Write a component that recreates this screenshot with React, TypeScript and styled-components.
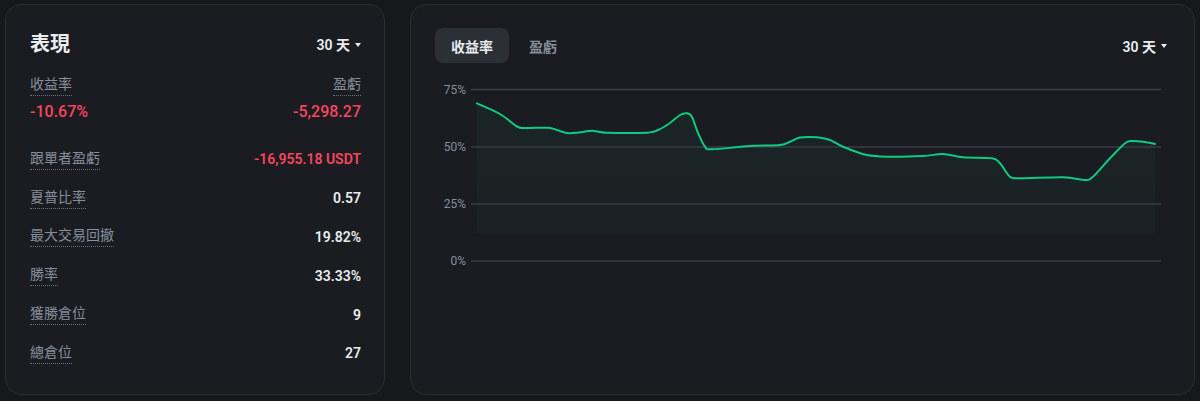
import React from "react";
import styled, { createGlobalStyle } from "styled-components";

const Global = createGlobalStyle`
  html, body { margin: 0; padding: 0; background: #17181c; }
  body { font-family: Roboto, "Noto Sans CJK TC", "Noto Sans", sans-serif; color: #eaecef; }
  * { box-sizing: border-box; }
`;

const Page = styled.div`
  display: flex;
  gap: 25px;
  padding: 4px 5px 6px 5px;
  height: 401px;
`;

const Card = styled.section<{ $w: number }>`
  width: ${(p) => p.$w}px;
  height: 391px;
  flex: none;
  background: #1b1c21;
  border: 1px solid #2a2d33;
  border-radius: 16px;
`;

const LeftCard = styled(Card)`
  padding: 25px 23px 0 24px;
  display: flex;
  flex-direction: column;
`;

const RightCard = styled(Card)`
  padding: 23px 27px 0 24px;
  display: flex;
  flex-direction: column;
`;

const HeaderRow = styled.div`
  display: flex;
  align-items: center;
  justify-content: space-between;
  height: 28px;
`;

const Title = styled.h2`
  margin: 0;
  font-size: 20px;
  font-weight: 700;
  color: #eaecef;
  line-height: 28px;
`;

const Range = styled.button`
  display: flex;
  align-items: center;
  gap: 5px;
  background: none;
  border: none;
  padding: 0;
  font-family: inherit;
  font-size: 14px;
  font-weight: 600;
  color: #eaecef;
  cursor: pointer;
`;

const Caret = styled.span`
  width: 0;
  height: 0;
  border-left: 3.5px solid transparent;
  border-right: 3.5px solid transparent;
  border-top: 4px solid #eaecef;
  margin-top: 1px;
`;

const PairRow = styled.div<{ $mt: number }>`
  display: flex;
  justify-content: space-between;
  align-items: center;
  margin-top: ${(p) => p.$mt}px;
`;

const Label = styled.span`
  display: inline-block;
  font-size: 14px;
  line-height: 18px;
  color: #848e9c;
  padding-bottom: 2px;
  border-bottom: 1px dotted #6a707c;
`;

const BigValue = styled.span`
  font-size: 16px;
  font-weight: 500;
  line-height: 22px;
  color: #f6465d;
`;

const StatRow = styled.div`
  display: flex;
  justify-content: space-between;
  align-items: center;
  height: 38.8px;
`;

const StatList = styled.div`
  display: flex;
  flex-direction: column;
  margin-top: 17px;
`;

const StatValue = styled.span<{ $neg?: boolean }>`
  font-size: 14px;
  font-weight: 600;
  color: ${(p) => (p.$neg ? "#f6465d" : "#eaecef")};
`;

const TabBar = styled.div`
  display: flex;
  align-items: center;
  justify-content: space-between;
`;

const Tabs = styled.div`
  display: flex;
  gap: 4px;
`;

const Tab = styled.button<{ $active?: boolean }>`
  height: 35px;
  padding: 0 16px;
  border: none;
  border-radius: 8px;
  background: ${(p) => (p.$active ? "#2b2f36" : "transparent")};
  color: ${(p) => (p.$active ? "#eaecef" : "#848e9c")};
  font-family: inherit;
  font-size: 14px;
  font-weight: 600;
  cursor: pointer;
`;

const ChartSvg = styled.svg`
  display: block;
  margin-top: 7px;
`;

const pts: [number, number][] = [
  [477, 103.3], [500, 114], [517, 126.5], [525, 128], [548, 127.7], [557, 130],
  [567, 133], [577, 132.7], [592, 130.7], [607, 132.7], [647, 132.7], [658, 130],
  [670, 123], [680, 115], [687, 113.3], [692, 117], [698, 133], [705, 146.7],
  [712, 149.3], [750, 146], [780, 145], [790, 141.7], [800, 137.5], [817, 137.3],
  [830, 140], [843, 146.7], [867, 155], [890, 156.7], [923, 156], [943, 154],
  [963, 157.3], [992, 158.3], [1000, 163.3], [1010, 176.7], [1020, 178.3],
  [1063, 177.3], [1085, 180], [1093, 176.7], [1110, 158.3], [1125, 143.3],
  [1132, 141], [1143, 141.7], [1155, 144],
];

function smoothPath(p: [number, number][]) {
  let d = `M${p[0][0]},${p[0][1]}`;
  for (let i = 0; i < p.length - 1; i++) {
    const p0 = p[i - 1] || p[i];
    const p1 = p[i];
    const p2 = p[i + 1];
    const p3 = p[i + 2] || p2;
    const t = 0.16;
    const c1x = p1[0] + (p2[0] - p0[0]) * t;
    const c1y = p1[1] + (p2[1] - p0[1]) * t;
    const c2x = p2[0] - (p3[0] - p1[0]) * t;
    const c2y = p2[1] - (p3[1] - p1[1]) * t;
    d += ` C${c1x.toFixed(1)},${c1y.toFixed(1)} ${c2x.toFixed(1)},${c2y.toFixed(1)} ${p2[0]},${p2[1]}`;
  }
  return d;
}

const linePath = smoothPath(pts);
const areaPath = `${linePath} L1155,233 L477,233 Z`;

const grid = [
  { y: 89.5, label: "75%" },
  { y: 147, label: "50%" },
  { y: 204, label: "25%" },
  { y: 261, label: "0%" },
];

const stats = [
  { label: "跟單者盈虧", value: "-16,955.18 USDT", neg: true },
  { label: "夏普比率", value: "0.57" },
  { label: "最大交易回撤", value: "19.82%" },
  { label: "勝率", value: "33.33%" },
  { label: "獲勝倉位", value: "9" },
  { label: "總倉位", value: "27" },
];

function Chart() {
  return (
    <ChartSvg width={735} height={210} viewBox="435 70 735 210">
      <defs>
        <linearGradient id="fillG" x1="0" y1="0" x2="0" y2="1">
          <stop offset="0" stopColor="#0ecb81" stopOpacity="0.05" />
          <stop offset="1" stopColor="#0ecb81" stopOpacity="0.025" />
        </linearGradient>
      </defs>
      <path d={areaPath} fill="url(#fillG)" />
      {grid.map((g) => (
        <g key={g.label}>
          <line x1={471} x2={1161} y1={g.y} y2={g.y} stroke="#3a3e45" strokeWidth={1.3} />
          <text
            x={466}
            y={g.y + 4}
            textAnchor="end"
            fontSize={12}
            fill="#848e9c"
            fontFamily="Roboto, sans-serif"
          >
            {g.label}
          </text>
        </g>
      ))}
      <path d={linePath} fill="none" stroke="#0ecb81" strokeWidth={2} strokeLinejoin="round" strokeLinecap="round" />
    </ChartSvg>
  );
}

export default function App() {
  return (
    <>
      <Global />
      <Page>
        <LeftCard $w={380}>
          <HeaderRow>
            <Title>表現</Title>
            <Range>
              30 天 <Caret />
            </Range>
          </HeaderRow>
          <PairRow $mt={17}>
            <Label>收益率</Label>
            <Label>盈虧</Label>
          </PairRow>
          <PairRow $mt={5}>
            <BigValue>-10.67%</BigValue>
            <BigValue>-5,298.27</BigValue>
          </PairRow>
          <StatList>
            {stats.map((s) => (
              <StatRow key={s.label}>
                <Label>{s.label}</Label>
                <StatValue $neg={s.neg}>{s.value}</StatValue>
              </StatRow>
            ))}
          </StatList>
        </LeftCard>
        <RightCard $w={785}>
          <TabBar>
            <Tabs>
              <Tab $active>收益率</Tab>
              <Tab>盈虧</Tab>
            </Tabs>
            <Range>
              30 天 <Caret />
            </Range>
          </TabBar>
          <Chart />
        </RightCard>
      </Page>
    </>
  );
}
